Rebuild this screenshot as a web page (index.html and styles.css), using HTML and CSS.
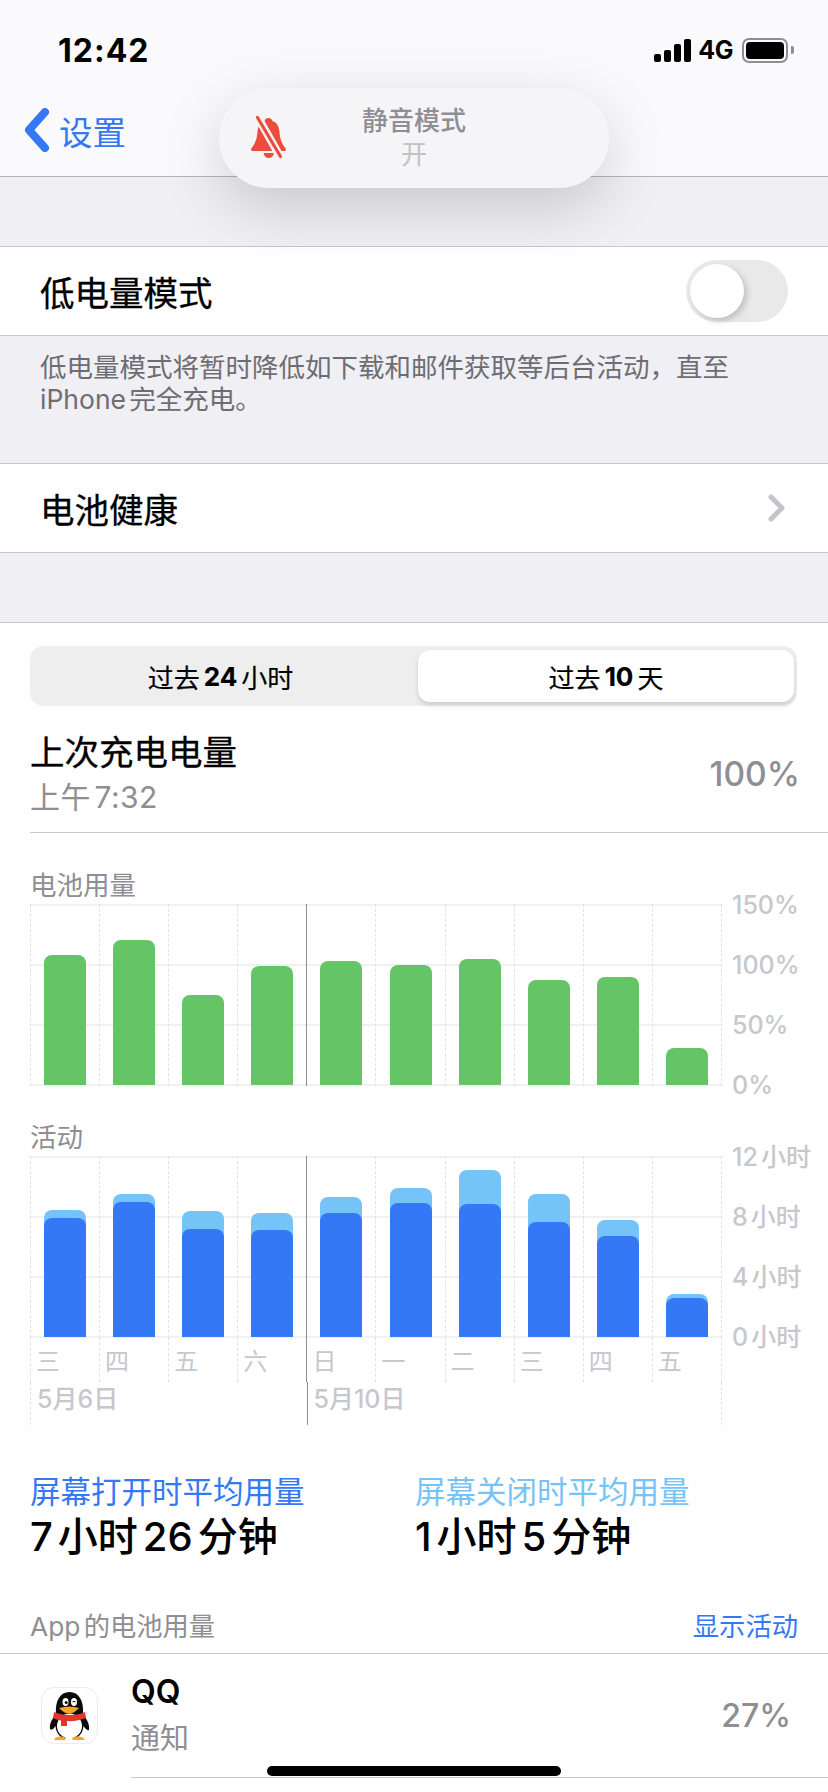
FILE: index.html
```html
<!DOCTYPE html>
<html lang="zh-CN">
<head>
<meta charset="utf-8">
<title>电池</title>
<link rel="stylesheet" href="styles.css">
</head>
<body>
<div class="screen">
  <header class="nav">
    <div class="status">
      <span class="clock">12:42</span>
      <div class="status-right">
        <div class="signal"><i class="s1"></i><i class="s2"></i><i class="s3"></i><i class="s4"></i></div>
        <span class="net">4G</span>
        <div class="battery"><div class="battery-fill"></div></div>
        <div class="battery-nub"></div>
      </div>
    </div>
    <div class="back">
      <svg class="chevron-back" viewBox="0 0 26 44"><path d="M21 4 L5 22 L21 40" fill="none" stroke="#3478f6" stroke-width="8" stroke-linecap="round" stroke-linejoin="round"/></svg>
      <span>设置</span>
    </div>
  </header>

  <div class="gap gap-top"></div>
  <div class="row row-border">
    <span>低电量模式</span>
    <div class="toggle"><div class="knob"></div></div>
  </div>
  <p class="note">低电量模式将暂时降低如下载和邮件获取等后台活动，直至<br>iPhone完全充电。</p>
  <div class="row row-border">
    <span>电池健康</span>
    <svg class="chevron" viewBox="0 0 18 28"><path d="M3 3 L14 14 L3 25" fill="none" stroke="#c4c4c8" stroke-width="5" stroke-linecap="round" stroke-linejoin="round"/></svg>
  </div>
  <div class="gap gap-mid"></div>

  <main class="panel">
    <div class="segmented">
      <div class="seg seg-off">过去<b>24</b>小时</div>
      <div class="seg seg-on">过去<b>10</b>天</div>
    </div>

    <div class="summary">
      <div>
        <div class="summary-title">上次充电电量</div>
        <div class="summary-sub">上午7:32</div>
      </div>
      <div class="summary-value">100%</div>
    </div>

    <div class="chart-label">电池用量</div>
    <div class="chart">
      <div class="plot">
        <div class="cell"><div class="bar green" style="height:130px"></div></div>
        <div class="cell"><div class="bar green" style="height:145px"></div></div>
        <div class="cell"><div class="bar green" style="height:90px"></div></div>
        <div class="cell"><div class="bar green" style="height:119px"></div></div>
        <div class="cell cell-mark"><div class="bar green" style="height:124px"></div></div>
        <div class="cell"><div class="bar green" style="height:120px"></div></div>
        <div class="cell"><div class="bar green" style="height:126px"></div></div>
        <div class="cell"><div class="bar green" style="height:105px"></div></div>
        <div class="cell"><div class="bar green" style="height:108px"></div></div>
        <div class="cell"><div class="bar green" style="height:37px"></div></div>
      </div>
      <div class="axis"><span>150%</span><span>100%</span><span>50%</span><span>0%</span></div>
    </div>

    <div class="chart-label">活动</div>
    <div class="chart">
      <div class="plot">
        <div class="cell"><div class="bar light" style="height:127px"><div class="bar blue" style="height:119px"></div></div></div>
        <div class="cell"><div class="bar light" style="height:143px"><div class="bar blue" style="height:135px"></div></div></div>
        <div class="cell"><div class="bar light" style="height:126px"><div class="bar blue" style="height:108px"></div></div></div>
        <div class="cell"><div class="bar light" style="height:124px"><div class="bar blue" style="height:107px"></div></div></div>
        <div class="cell cell-mark"><div class="bar light" style="height:140px"><div class="bar blue" style="height:124px"></div></div></div>
        <div class="cell"><div class="bar light" style="height:149px"><div class="bar blue" style="height:134px"></div></div></div>
        <div class="cell"><div class="bar light" style="height:167px"><div class="bar blue" style="height:133px"></div></div></div>
        <div class="cell"><div class="bar light" style="height:143px"><div class="bar blue" style="height:115px"></div></div></div>
        <div class="cell"><div class="bar light" style="height:117px"><div class="bar blue" style="height:101px"></div></div></div>
        <div class="cell"><div class="bar light" style="height:43px"><div class="bar blue" style="height:39px"></div></div></div>
      </div>
      <div class="axis"><span>12小时</span><span>8小时</span><span>4小时</span><span>0小时</span></div>
    </div>
    <div class="days">
      <div class="day">三</div><div class="day">四</div><div class="day">五</div><div class="day">六</div>
      <div class="day cell-mark">日</div><div class="day">一</div><div class="day">二</div><div class="day">三</div><div class="day">四</div><div class="day">五</div>
    </div>
    <div class="dates">
      <div class="date date-a">5月6日</div>
      <div class="date date-b">5月10日</div>
    </div>

    <div class="stats">
      <div class="stat">
        <div class="stat-name name-on">屏幕打开时平均用量</div>
        <div class="stat-value">7小时26分钟</div>
      </div>
      <div class="stat">
        <div class="stat-name name-off">屏幕关闭时平均用量</div>
        <div class="stat-value">1小时5分钟</div>
      </div>
    </div>

    <div class="app-head">
      <span class="app-head-title">App的电池用量</span>
      <span class="app-head-link">显示活动</span>
    </div>

    <div class="app-row">
      <div class="app-icon">
        <svg viewBox="0 0 57 57" width="57" height="57">
          <path d="M9 42 C8 36 12 31 15 27 C14 14 19 5 28.500 5 C38 5 43 14 42 27 C45 31 49 37 48 43 C46 44 44 41 42.500 39 C42 45 39 49 35 51 L22 51 C18 49 15 45 14.500 39 C13 41 11 44 9 42 Z" fill="#0b0b0b"/>
          <ellipse cx="28.500" cy="39" rx="12.500" ry="12.500" fill="#fff"/>
          <path d="M13 25 C22 29 36 29 44 25 L45 31 C39 33.500 32 34.500 26 34 L26 39 L20 39 L20 33.500 C17 33 14 32 12 31 Z" fill="#e2352b"/>
          <ellipse cx="24.500" cy="15" rx="3" ry="4" fill="#fff"/>
          <ellipse cx="33" cy="15" rx="3" ry="4" fill="#fff"/>
          <circle cx="25.200" cy="15.500" r="1.500" fill="#0b0b0b"/>
          <path d="M31.500 15 Q33 13.500 34.500 15" fill="none" stroke="#0b0b0b" stroke-width="1"/>
          <path d="M18 21 Q28.500 18 38 21 Q33 26.500 28.500 26.500 Q23 26.500 18 21 Z" fill="#f5a623"/>
          <path d="M13 52 Q18 47 25 51 L24 53 L14 53 Z" fill="#f5a623"/>
          <path d="M31 51 Q38 47 44 52 L43 53 L32 53 Z" fill="#f5a623"/>
        </svg>
      </div>
      <div class="app-body">
        <div class="app-text">
          <div class="app-name">QQ</div>
          <div class="app-sub">通知</div>
        </div>
        <div class="app-pct">27%</div>
      </div>
    </div>
  </main>

  <div class="hud">
    <svg class="hud-bell" viewBox="0 0 35 42">
      <path d="M17.500 2 C20 2 21 3.500 21.500 5 C26 6.500 28 10.500 28.500 16 C29 23 31 28 35 33 C35 34.500 34 35 33 35 L2 35 C1 35 0 34.500 0 33 C4 28 6 23 6.500 16 C7 10.500 9 6.500 13.500 5 C14 3.500 15 2 17.500 2 Z" fill="#ec4c3c"/>
      <path d="M12.500 37 L23 37 C22.500 40 20.500 42 17.800 42 C15 42 13 40 12.500 37 Z" fill="#ec4c3c"/>
      <path d="M5 -2 L31 44" stroke="#f5f5f7" stroke-width="8"/>
      <path d="M6.500 1.500 L29.500 40.500" stroke="#ec4c3c" stroke-width="3.200" stroke-linecap="round"/>
    </svg>
    <div class="hud-title">静音模式</div>
    <div class="hud-sub">开</div>
  </div>

  <div class="home-bar"></div>
</div>
</body>
</html>
```

FILE: styles.css
```css
* { box-sizing: border-box; }
html, body { margin: 0; padding: 0; }
body {
  font-family: "Inter", "Noto Sans CJK SC", sans-serif;
  background: #efeff4;
  color: #000;
  text-autospace: normal;
}
.screen {
  position: relative;
  width: 828px;
  height: 1792px;
  overflow: hidden;
  background: #efeff4;
}

/* nav */
.nav {
  height: 177px;
  background: #fafafc;
  border-bottom: 1px solid #b4b4b6;
  display: flex;
  flex-direction: column;
}
.status {
  height: 100px;
  padding: 0 34px 0 58px;
  display: flex;
  justify-content: space-between;
  align-items: center;
}
.clock { font-size: 32px; font-weight: 700; letter-spacing: 1px; }
.status-right { display: flex; align-items: center; }
.signal { display: flex; align-items: flex-end; gap: 3px; height: 23px; margin-right: 7px; }
.signal i { display: block; width: 7px; background: #000; border-radius: 2px; }
.s1 { height: 8px; }
.s2 { height: 12px; }
.s3 { height: 18px; }
.s4 { height: 23px; }
.net { font-size: 25px; font-weight: 700; margin-right: 9px; letter-spacing: -0.5px; }
.battery {
  width: 46px;
  height: 25px;
  border: 2px solid #8e8e93;
  border-radius: 7px;
  padding: 2px;
}
.battery-fill { width: 100%; height: 100%; background: #000; border-radius: 4px; }
.battery-nub { width: 3px; height: 8px; background: #8e8e93; border-radius: 0 2px 2px 0; margin-left: 3px; }

.back {
  display: flex;
  align-items: center;
  padding: 0 0 4px 24px;
  height: 64px;
  color: #3478f6;
  font-size: 33.500px;
}
.chevron-back { width: 26px; height: 44px; margin-right: 9px; }

/* groups */
.gap-top { height: 69px; }
.gap-mid { height: 70px; border-bottom: 1px solid #c8c8cc; }
.row {
  height: 90px;
  background: #fff;
  border-top: 1px solid #c8c8cc;
  border-bottom: 1px solid #c8c8cc;
  display: flex;
  align-items: center;
  justify-content: space-between;
  padding: 0 40px 0 40px;
  font-size: 34.500px;
  -webkit-text-stroke: 0.3px #000;
}
.toggle {
  width: 102px;
  height: 62px;
  border-radius: 31px;
  background: #e9e9ea;
  padding: 4px;
}
.knob {
  width: 54px;
  height: 54px;
  border-radius: 50%;
  background: #fff;
  box-shadow: 3px 3px 6px rgba(0,0,0,.18);
}
.chevron { width: 18px; height: 28px; margin-right: 2px; }
.note {
  margin: 0;
  height: 127px;
  padding: 15px 30px 0 40px;
  font-size: 26.500px;
  line-height: 32px;
  color: #6d6d72;
}

/* panel */
.panel { background: #fff; height: 1170px; padding-top: 23px; }
.segmented {
  margin: 0 31px 0 30px;
  height: 60px;
  background: #eeeeef;
  border-radius: 14px;
  display: flex;
  padding: 4px 3px 4px 0;
}
.seg {
  flex: 1;
  display: flex;
  align-items: center;
  justify-content: center;
  gap: 4px;
  font-size: 26px;
  white-space: pre;
  -webkit-text-stroke: 0.2px #000;
}
.seg b { font-weight: 700; }
.seg-off { padding-right: 7px; }
.seg-on {
  flex: 0 0 376px;
  background: #fff;
  border-radius: 12px;
  box-shadow: 0 3px 5px rgba(0,0,0,.14);
}
.summary {
  height: 127px;
  margin-left: 30px;
  padding: 26px 28px 0 0;
  border-bottom: 1px solid #c8c8cc;
  display: flex;
  justify-content: space-between;
}
.summary-title { font-size: 34.500px; line-height: 42px; -webkit-text-stroke: 0.3px #000; }
.summary-sub { font-size: 30px; line-height: 46px; color: #8e8e93; letter-spacing: 0.4px; }
.summary-value { font-size: 33.500px; line-height: 40px; color: #8e8e93; font-weight: 500; margin-top: 22px; }

.chart-label {
  height: 72px;
  padding: 32px 0 0 30px;
  font-size: 26.500px;
  line-height: 40px;
  color: #8e8e93;
}
.chart { display: flex; height: 180px; padding-left: 30px; }
.plot {
  width: 692px;
  height: 182px;
  display: flex;
  border-right: 1px dashed #e2e2e6;
  margin-top: -1px;
  background: repeating-linear-gradient(to bottom, #f1f1f3 0, #f1f1f3 2px, transparent 2px, transparent 60px);
}
.cell {
  flex: 1;
  display: flex;
  align-items: flex-end;
  justify-content: center;
  border-left: 1px dashed #e2e2e6;
}
.cell-mark { border-left: 1px solid #8e8e92; }
.bar {
  width: 42px;
  border-radius: 8px 8px 0 0;
  display: flex;
  align-items: flex-end;
}
.green { background: #65c466; margin-bottom: 1px; }
.light { background: #76c3f7; margin-bottom: 1px; }
.blue { background: #3478f6; }
.axis {
  margin: -15px 0;
  padding-left: 10px;
  display: flex;
  flex-direction: column;
  justify-content: space-between;
  height: 210px;
  font-size: 25px;
  line-height: 30px;
  color: #c7c7cc;
  font-weight: 500;
  white-space: nowrap;
}
.days { display: flex; width: 692px; margin-left: 30px; height: 45px; border-right: 1px dashed #e2e2e6; }
.day {
  flex: 1;
  padding: 8px 0 0 5px;
  font-size: 24px;
  line-height: 34px;
  color: #c7c7cc;
  border-left: 1px dashed #e2e2e6;
}
.day.cell-mark { border-left: 1px solid #8e8e92; }
.dates { display: flex; width: 692px; margin-left: 30px; height: 43px; border-right: 1px dashed #e2e2e6; }
.date { font-size: 25px; line-height: 34px; color: #c7c7cc; font-weight: 500; padding-left: 6px; text-autospace: no-autospace; }
.date-a { width: 276.500px; border-left: 1px dashed #e2e2e6; }
.date-b { flex: 1; border-left: 1px solid #8e8e92; }

.stats { display: flex; height: 128px; padding: 47px 0 0 30px; }
.stat { width: 385px; }
.stat-name { font-size: 30.500px; line-height: 40px; }
.name-on { color: #3478f6; }
.name-off { color: #76c3f7; }
.stat-value { font-size: 40px; line-height: 50px; font-weight: 500; white-space: nowrap; }

.app-head {
  height: 101px;
  padding: 59px 30px 0 30px;
  border-bottom: 1px solid #c8c8cc;
  display: flex;
  justify-content: space-between;
  font-size: 26.300px;
  line-height: 30px;
}
.app-head-title { color: #8e8e93; }
.app-head-link { color: #3478f6; }
.app-row { display: flex; height: 124px; padding-left: 41px; }
.app-icon {
  width: 57px;
  height: 57px;
  margin-top: 33px;
  margin-right: 33px;
  border-radius: 13px;
  border: 1px solid #ececee;
  overflow: hidden;
  flex: none;
}
.app-icon svg { display: block; margin: -1px; }
.app-body {
  flex: 1;
  display: flex;
  justify-content: space-between;
  border-bottom: 1px solid #c8c8cc;
  padding-right: 37px;
}
.app-name { font-size: 32px; line-height: 40px; font-weight: 600; margin-top: 18px; }
.app-sub { font-size: 29px; line-height: 46px; color: #8e8e93; margin-top: 4px; }
.app-pct { font-size: 32px; line-height: 40px; font-weight: 500; color: #8e8e93; margin-top: 42px; }

/* overlays */
.hud {
  position: absolute;
  left: 219px;
  top: 88px;
  width: 390px;
  height: 100px;
  border-radius: 50px;
  background: #f5f5f7;
  box-shadow: 0 18px 60px rgba(0,0,0,.17);
  display: flex;
  flex-direction: column;
  align-items: center;
  padding-top: 16px;
  font-size: 26px;
  line-height: 34px;
}
.hud-bell { position: absolute; left: 32px; top: 28px; width: 35px; height: 42px; overflow: visible; }
.hud-title { color: #8e8e93; font-weight: 500; }
.hud-sub { color: #c2c2c6; }
.home-bar {
  position: absolute;
  left: 267px;
  top: 1766px;
  width: 294px;
  height: 10px;
  border-radius: 5px;
  background: #000;
}
```
